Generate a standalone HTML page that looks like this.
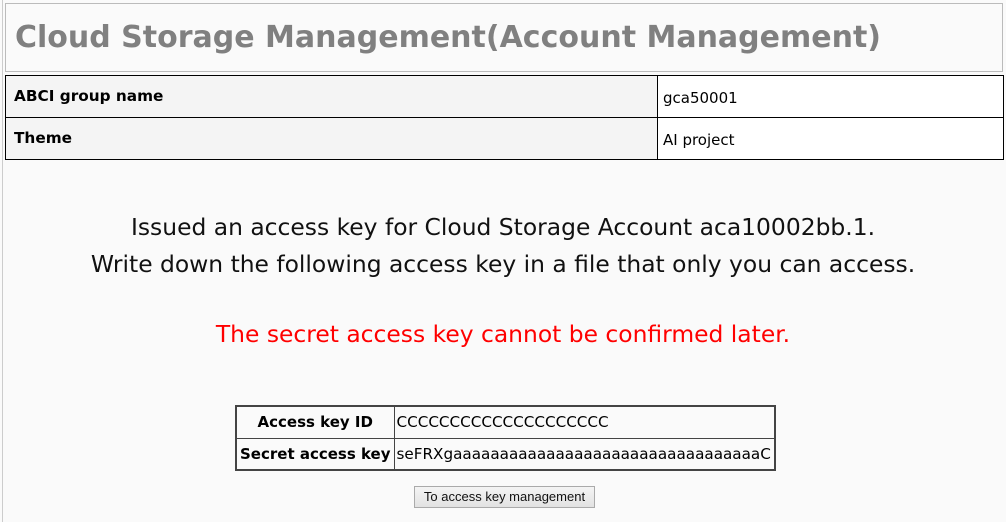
<!DOCTYPE html>
<html><head><meta charset="utf-8"><style>
body{margin:0;background:#fafafa;font-family:"DejaVu Sans",Verdana,sans-serif;width:1006px;height:522px;overflow:hidden;position:relative}
.wrap{position:absolute;left:2px;top:0;width:1004px;height:522px;border-left:1px solid #ccc}
.title{position:absolute;left:5px;top:3px;width:996px;height:67px;border:1px solid #bbb;background:#fafafa}
.title h1{margin:0;position:absolute;left:9px;top:16px;font-size:30px;color:#808080;font-weight:bold;white-space:nowrap;line-height:36px}
table{border-collapse:collapse;position:absolute}
.t1{left:5px;top:75px;width:999px}
.t1 td,.t1 th{border:1px solid #000;height:42px;box-sizing:border-box;font-size:15.3px;padding:0 8px;line-height:17px}
.t1 th{text-align:left;background:#f4f4f4;width:652px;vertical-align:middle;padding-bottom:1px}
.t1 td{background:#fff;padding-left:5px;padding-top:4px;font-size:15px}
.msg{position:absolute;left:0;width:1006px;text-align:center;font-size:23.4px;color:#111}
.t2{left:235px;top:405px;width:541px;border:2px solid #444}
.t2 th,.t2 td{border:1px solid #444;height:32px;box-sizing:border-box;font-size:15px;padding:0 3px}
.t2 th{width:156px;text-align:center;white-space:nowrap}
.t2 td{text-align:left;white-space:nowrap;padding:0 2px;font-size:15.2px}
.btn{position:absolute;left:414px;top:486px;width:179px;height:20px;border:1px solid #aaa;background:linear-gradient(#f4f4f4,#e2e2e2);font-family:"Liberation Sans",sans-serif;font-size:13px;text-align:center;line-height:20px;color:#111}
</style></head><body>
<div class="wrap"></div>
<div class="title"><h1>Cloud Storage Management(Account Management)</h1></div>
<table class="t1"><tr><th>ABCI group name</th><td>gca50001</td></tr><tr><th>Theme</th><td>AI project</td></tr></table>
<div class="msg" style="top:213px">Issued an access key for Cloud Storage Account aca10002bb.1.</div>
<div class="msg" style="top:250px">Write down the following access key in a file that only you can access.</div>
<div class="msg" style="top:320px;color:#f00">The secret access key cannot be confirmed later.</div>
<table class="t2"><tr><th>Access key ID</th><td>CCCCCCCCCCCCCCCCCCCC</td></tr><tr><th>Secret access key</th><td>seFRXgaaaaaaaaaaaaaaaaaaaaaaaaaaaaaaaaaC</td></tr></table>
<div class="btn">To access key management</div>
</body></html>
